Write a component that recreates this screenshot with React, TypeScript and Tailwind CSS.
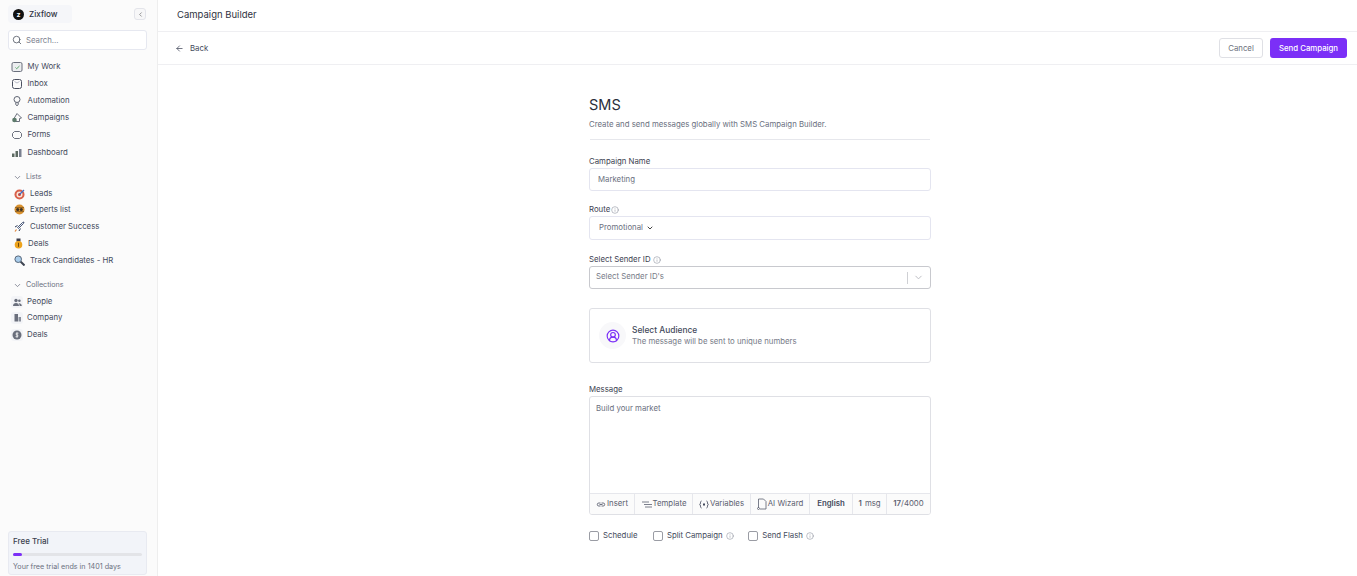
import { ArrowLeft, ChevronDown, ChevronLeft, Info, Search, CircleUserRound } from 'lucide-react';
import type { ReactNode } from 'react';

const Tick = () => (
  <svg width="12" height="12" viewBox="0 0 12 12" fill="#eceef0" stroke="#6a6f7c" strokeWidth="1">
    <rect x="1" y="1.5" width="10" height="9" rx="1.5" />
    <path d="M4.5 6.500l1.2 1.200L8.500 5" stroke="#5aa469" fill="none" />
  </svg>
);
const InboxIcon = () => (
  <svg width="12" height="12" viewBox="0 0 12 12" fill="none" stroke="#4b5060" strokeWidth="1">
    <rect x="1.5" y="1.5" width="9" height="9" rx="2" />
    <path d="M3.500 3.500L6 5l2.500-1.500" stroke="#b9bcc9" />
  </svg>
);
const BulbIcon = () => (
  <svg width="12" height="12" viewBox="0 0 12 12" fill="none" stroke="#5f6472" strokeWidth="1">
    <circle cx="6" cy="4.500" r="3" />
    <path d="M4.800 7.500v2.200l1.200 1 1.200-1V7.500" />
  </svg>
);
const RocketIcon = () => (
  <svg width="12" height="12" viewBox="0 0 12 12" fill="none" stroke="#6a6f7c" strokeWidth="1">
    <path d="M6 1.500L10.500 6 8.500 6.500V9.500H4.500L3 6.500z" />
    <circle cx="3.500" cy="8" r="2.300" fill="#5d7a6b" stroke="none" />
  </svg>
);
const FormIcon = () => (
  <svg width="12" height="12" viewBox="0 0 12 12" fill="none" stroke="#6a6f7c" strokeWidth="1">
    <path d="M3.500 2.500h5L10.500 4.500v3l-2 2h-5l-2-2v-3z" strokeLinejoin="round" />
  </svg>
);
const BarsIcon = () => (
  <svg width="12" height="12" viewBox="0 0 12 12" fill="#5d6a62">
    <rect x="1" y="6.500" width="2.500" height="3.500" />
    <rect x="4.500" y="4" width="2.500" height="6" />
    <rect x="8" y="2" width="2.500" height="8" fill="#7a8090" />
  </svg>
);

const Emoji = ({ kind }: { kind: string }) => {
  if (kind === 'target')
    return (
      <svg width="11" height="11" viewBox="0 0 11 11">
        <circle cx="5.500" cy="5.500" r="5" fill="#d9604a" />
        <circle cx="5.500" cy="5.500" r="3" fill="#f7e7dc" />
        <circle cx="5.500" cy="5.500" r="1.500" fill="#d8432f" />
        <path d="M5.500 5.500L10 1" stroke="#3d6fc9" strokeWidth="1.200" />
      </svg>
    );
  if (kind === 'eyes')
    return (
      <svg width="11" height="11" viewBox="0 0 11 11">
        <circle cx="5.500" cy="5.500" r="5" fill="#d9912f" />
        <circle cx="3.700" cy="5.500" r="1.500" fill="#3b3228" />
        <circle cx="7.300" cy="5.500" r="1.500" fill="#3b3228" />
        <path d="M1 3.500h9M1 7.500h9" stroke="#7a5520" strokeWidth="0.700" />
      </svg>
    );
  if (kind === 'rocket')
    return (
      <svg width="11" height="11" viewBox="0 0 11 11" fill="none">
        <path d="M3.500 6.500L8.500 1.500 10 1 9.500 2.500 4.500 7.500z" fill="#e9edf5" stroke="#3a4a6a" strokeWidth="0.900" />
        <path d="M3.500 4.500L1 6M6.500 7.500L5 10" stroke="#2d3b59" strokeWidth="1" />
        <path d="M2.500 8.500L1 10.500" stroke="#e0843a" strokeWidth="1.200" />
      </svg>
    );
  if (kind === 'medal')
    return (
      <svg width="9" height="11" viewBox="0 0 9 11">
        <rect x="2.500" y="0.500" width="4" height="3" fill="#3c3c4a" />
        <circle cx="4.500" cy="6.800" r="3.800" fill="#eda31d" />
        <rect x="4" y="4.800" width="1" height="4" fill="#6f4a10" />
      </svg>
    );
  return (
    <svg width="11" height="11" viewBox="0 0 11 11">
      <path d="M6.500 6.500l4 4" stroke="#3f4552" strokeWidth="2" />
      <circle cx="4.200" cy="4.200" r="3.300" fill="#a9cdec" stroke="#59687a" strokeWidth="1" />
    </svg>
  );
};

const PeopleIcon = () => (
  <svg width="9" height="9" viewBox="0 0 9 9" fill="#6a6f7c">
    <circle cx="3" cy="2.500" r="1.700" />
    <circle cx="6.400" cy="2.800" r="1.300" />
    <path d="M0 8c0-2 1.200-3 3-3s3 1 3 3zM6.600 8c0-1-.3-2-1-2.800 1.800-.2 3.200.8 3.200 2.800z" />
  </svg>
);
const CompanyIcon = () => (
  <svg width="9" height="9" viewBox="0 0 9 9" fill="#6a6f7c">
    <rect x="1.500" y="1" width="3.500" height="7.500" />
    <rect x="5.500" y="4" width="2.500" height="4.500" fill="#8a8f9c" />
  </svg>
);
const DollarIcon = () => (
  <svg width="10" height="10" viewBox="0 0 10 10">
    <circle cx="5" cy="5" r="4.500" fill="#6a6f7c" />
    <path d="M6.500 3.200H4.200v1.700h1.600v1.800H3.500M5 2.200v5.600" stroke="#fff" strokeWidth="0.700" fill="none" />
  </svg>
);

const mainLinks = [
  { name: 'My Work', icon: <Tick /> },
  { name: 'Inbox', icon: <InboxIcon /> },
  { name: 'Automation', icon: <BulbIcon /> },
  { name: 'Campaigns', icon: <RocketIcon /> },
  { name: 'Forms', icon: <FormIcon /> },
  { name: 'Dashboard', icon: <BarsIcon /> },
];

const lists = [
  { name: 'Leads', kind: 'target' },
  { name: 'Experts list', kind: 'eyes' },
  { name: 'Customer Success', kind: 'rocket' },
  { name: 'Deals', kind: 'medal' },
  { name: 'Track Candidates - HR', kind: 'search' },
];

const collections = [
  { name: 'People', icon: <PeopleIcon /> },
  { name: 'Company', icon: <CompanyIcon /> },
  { name: 'Deals', icon: <DollarIcon /> },
];

function SectionTitle({ label }: { label: string }) {
  return (
    <div className="flex items-center h-[16px] pt-[1px] pl-[13px] gap-[4px] text-[7.150px] text-[#6b7080]">
      <ChevronDown className="w-[9px] h-[9px]" />
      {label}
    </div>
  );
}

function Sidebar() {
  return (
    <aside className="w-[158px] shrink-0 h-full flex flex-col bg-[#fbfbfb] border-r border-[#eeeeee]">
      <div className="flex items-center justify-between pl-[8px] pr-[11px] h-[28px]">
        <div className="flex items-center gap-[5px] w-[64px] h-[18px] pl-[5px] bg-[#f5f6f9] rounded">
          <span className="w-[11px] h-[11px] rounded-full bg-[#111] flex items-center justify-center text-white text-[7px] font-bold leading-none">z</span>
          <span className="text-[8.100px] font-medium text-[#2f3342]">Zixflow</span>
        </div>
        <div className="w-[12px] h-[12px] rounded-[3px] border border-[#e3e4ea] bg-[#f7f7f8] flex items-center justify-center">
          <ChevronLeft className="w-[7px] h-[7px] text-[#555]" />
        </div>
      </div>
      <div className="ml-[8px] mr-[10px] mt-[2px] h-[20px] border border-[#e6e8f0] rounded-[3px] bg-white flex items-center pl-[3px] gap-[4px]">
        <Search className="w-[10px] h-[10px] text-[#555b68]" />
        <span className="pt-[1px] text-[7.800px] text-[#7d8290]">Search...</span>
      </div>
      <nav className="mt-[8px] flex flex-col">
        {mainLinks.map((link) => (
          <div key={link.name} className="flex items-center h-[17px] last:mt-[1px] pl-[11px] gap-[4.500px] text-[7.800px] text-[#444a5c]">
            {link.icon}
            {link.name}
          </div>
        ))}
      </nav>
      <div className="mt-[8px]">
        <SectionTitle label="Lists" />
      </div>
      <div className="flex flex-col">
        {lists.map((item) => (
          <div key={item.name} className="flex items-center h-[17px] first:h-[16px] first:pt-[2px] pl-[14px] gap-[5px] text-[7.800px] text-[#444a5c]">
            <Emoji kind={item.kind} />
            {item.name}
          </div>
        ))}
      </div>
      <div className="mt-[8px]">
        <SectionTitle label="Collections" />
      </div>
      <div className="flex flex-col">
        {collections.map((item) => (
          <div key={item.name} className="flex items-center h-[17px] first:h-[16px] first:pt-[2px] pl-[11px] gap-[4px] text-[7.800px] text-[#444a5c]">
            <span className="w-[12px] h-[12px] rounded-[3px] bg-[#f3f4f7] flex items-center justify-center">{item.icon}</span>
            {item.name}
          </div>
        ))}
      </div>
      <div className="mt-auto ml-[8px] mr-[10px] mb-[1px] h-[44px] rounded-[3px] bg-[#f2f4f9] border border-[#e8eaf1] px-[4px] pt-[3px]">
        <div className="text-[8px] font-medium text-[#3a3f4e]">Free Trial</div>
        <div className="mt-[6px] h-[3px] rounded bg-[#e3e4e8]">
          <div className="w-[9px] h-[3px] rounded bg-[#7c2ff7]" />
        </div>
        <div className="mt-[6px] text-[7.200px] text-[#6b7080] whitespace-nowrap">Your free trial ends in 1401 days</div>
      </div>
    </aside>
  );
}

function Label({ children }: { children: ReactNode }) {
  return <div className="flex items-center gap-[1px] h-[12px] text-[7.800px] text-[#3d4252]">{children}</div>;
}

function Tool({ children, className = '' }: { children: ReactNode; className?: string }) {
  return (
    <div className={`flex items-center justify-center gap-[1px] h-full border-r border-[#e6e7ec] text-[7.800px] text-[#5b6070] ${className}`}>
      {children}
    </div>
  );
}

function InfoDot({ className = '' }: { className?: string }) {
  return <Info className={`w-[8px] h-[8px] stroke-[1.500] text-[#7d8290] ${className}`} />;
}

function Check({ label, info, className = '' }: { label: string; info?: boolean; className?: string }) {
  return (
    <div className={`flex items-center gap-[4px] text-[7.800px] text-[#444a5c] ${className}`}>
      <span className="w-[10px] h-[10px] rounded-[2px] border border-[#9a9ca4] bg-white" />
      {label}
      {info && <InfoDot className="ml-[-1px]" />}
    </div>
  );
}

export default function App() {
  return (
    <div className="w-[1357px] h-[576px] overflow-hidden flex bg-white font-['Inter',sans-serif]">
      <Sidebar />
      <main className="flex-1 min-w-0 flex flex-col">
        <div className="h-[32px] shrink-0 border-b border-[#efeff2] flex items-center pl-[19px] text-[9.500px] text-[#2f3342]">
          Campaign Builder
        </div>
        <div className="h-[33px] shrink-0 border-b border-[#efeff2] flex items-center justify-between pl-[17px] pr-[10px]">
          <div className="flex items-center gap-[6px] pt-[1px] text-[7.800px] text-[#444a5c]">
            <ArrowLeft className="w-[9px] h-[9px]" />
            Back
          </div>
          <div className="flex items-center gap-[7px]">
            <button className="w-[44px] h-[20px] pt-[1px] rounded-[3px] border border-[#dfe0e5] text-[7.800px] text-[#6b6f7b] bg-white">Cancel</button>
            <button className="w-[77px] h-[20px] pt-[1px] rounded-[3px] bg-[#7b2ff7] text-[7.800px] font-medium text-white">Send Campaign</button>
          </div>
        </div>
        <div className="w-[342px] ml-[431px] pt-[32px]">
          <h1 className="text-[14.500px] leading-[16px] text-[#2b2f3a]">SMS</h1>
          <p className="mt-[5px] text-[7.800px] leading-[12px] text-[#6b7080]">Create and send messages globally with SMS Campaign Builder.</p>
          <div className="mt-[9px] ml-[1px] mr-[1px] border-b border-[#e6e7ec]" />

          <div className="mt-[16px]">
            <Label>Campaign Name</Label>
          </div>
          <div className="h-[23px] border border-[#e4e5f0] rounded-[3px] flex items-center pl-[8px] text-[7.800px] text-[#6b7080]">Marketing</div>

          <div className="mt-[13px]">
            <Label>
              Route
              <InfoDot />
            </Label>
          </div>
          <div className="h-[24px] border border-[#e4e5f0] rounded-[3px] flex items-center pl-[9px] gap-[3px] text-[7.800px] text-[#6b7080]">
            Promotional
            <ChevronDown className="w-[8px] h-[8px] text-[#444] stroke-[3]" />
          </div>

          <div className="mt-[14px]">
            <Label>
              Select Sender ID
              <InfoDot className="ml-[1px]" />
            </Label>
          </div>
          <div className="h-[23px] border border-[#c8c9ce] rounded-[3px] flex items-center justify-between pl-[6px] text-[7.800px] text-[#777b88]">
            <span className="pb-[1px]">Select Sender ID's</span>
            <div className="flex items-center h-[12px] border-l border-[#cfd0d4] pl-[5px] pr-[6px]">
              <ChevronDown className="w-[11px] h-[11px] text-[#b8b9be]" />
            </div>
          </div>

          <div className="mt-[19px] h-[55px] border border-[#dfe0e5] rounded-[3px] flex items-center pl-[9px] gap-[6px]">
            <div className="w-[27px] h-[27px] rounded-full bg-[#f8f8fa] flex items-center justify-center">
              <CircleUserRound className="w-[14px] h-[14px] text-[#7b2ff7]" />
            </div>
            <div>
              <div className="text-[8.400px] leading-[11px] font-medium text-[#444a5c]">Select Audience</div>
              <div className="text-[7.800px] leading-[11px] text-[#777b88]">The message will be sent to unique numbers</div>
            </div>
          </div>

          <div className="mt-[21px]">
            <Label>Message</Label>
          </div>
          <div className="h-[119px] border border-[#dfe0e5] rounded-[3px] flex flex-col overflow-hidden">
            <div className="flex-1 pl-[6px] pt-[5px] text-[7.800px] leading-[12px] text-[#6b7080]">Build your market</div>
            <div className="h-[21px] border-t border-[#e6e7ec] bg-[#fbfbfb] flex items-center">
              <Tool className="w-[45px]">
                <svg width="10" height="9" viewBox="0 0 10 9" fill="none" stroke="#5b6070" strokeWidth="0.900">
                  <path d="M4.500 3H2.800a1.500 1.500 0 0 0 0 3h1.700M5.500 3h1.700a1.500 1.500 0 0 1 0 3H5.500M3.500 4.500h3" />
                </svg>
                Insert
              </Tool>
              <Tool className="w-[58px]">
                <svg width="11" height="9" viewBox="0 0 11 9" fill="none" stroke="#5b6070" strokeWidth="0.800">
                  <path d="M1 2h7M3 4.500h8M4 7h7" />
                </svg>
                Template
              </Tool>
              <Tool className="w-[58px]">
                <svg width="10" height="9" viewBox="0 0 10 9" fill="none" stroke="#444a5c" strokeWidth="0.900">
                  <path d="M2.500 1C1 1 1.800 4.500.8 4.500 1.800 4.500 1 8 2.500 8M7.500 1C9 1 8.200 4.500 9.200 4.500 8.200 4.500 9 8 7.500 8" />
                  <rect x="4" y="3.500" width="2" height="2" fill="#444a5c" stroke="none" />
                </svg>
                Variables
              </Tool>
              <Tool className="w-[59px]">
                <svg width="10" height="12" viewBox="0 0 10 12" fill="none" stroke="#5b6070" strokeWidth="0.800">
                  <path d="M1.500 10V1h5l2.500 2.500V11H3" />
                  <circle cx="1.500" cy="10.500" r="1" />
                </svg>
                AI Wizard
              </Tool>
              <Tool className="w-[43px] font-semibold text-[#444a5c]">English</Tool>
              <Tool className="w-[34px]">
                <span className="font-semibold">1</span>&nbsp;msg
              </Tool>
              <div className="flex-1 text-center text-[7.800px] text-[#5b6070]">
                <span className="font-semibold">17</span>/4000
              </div>
            </div>
          </div>

          <div className="mt-[15px] flex items-center">
            <Check label="Schedule" className="mr-[15.500px]" />
            <Check label="Split Campaign" info className="mr-[14.500px]" />
            <Check label="Send Flash" info />
          </div>
        </div>
      </main>
    </div>
  );
}
